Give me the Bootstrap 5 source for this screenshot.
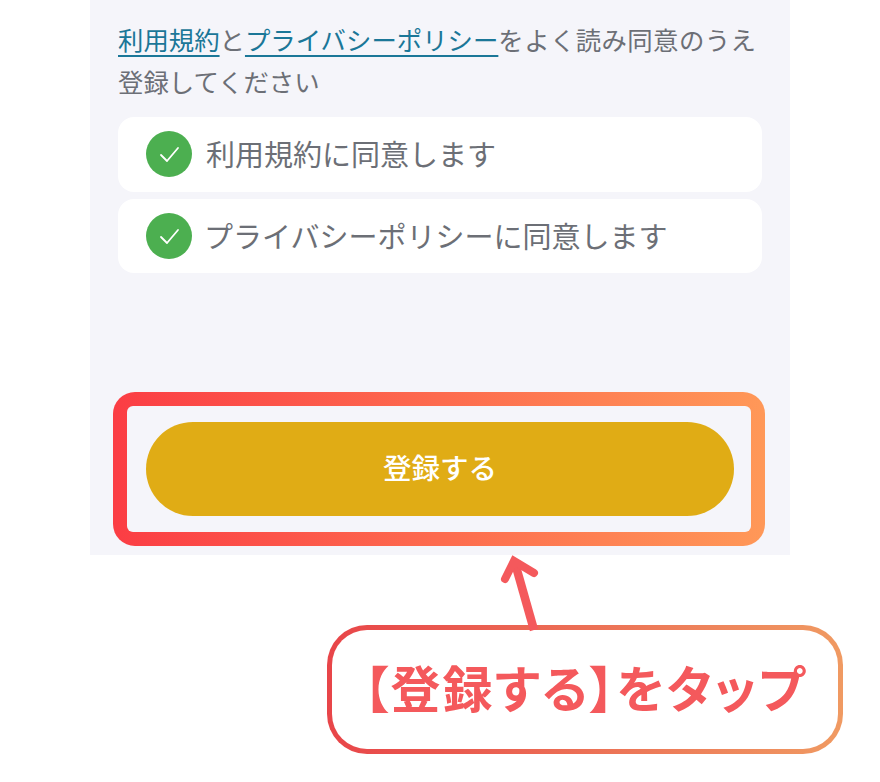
<!DOCTYPE html>
<html lang="ja">
<head>
<meta charset="utf-8">
<title>登録</title>
<link href="https://cdn.jsdelivr.net/npm/bootstrap@5.3.0/dist/css/bootstrap.min.css" rel="stylesheet">
<style>
html,body{height:782px;overflow:hidden;background:#fff}
body{font-family:"Noto Sans CJK JP","Liberation Sans",sans-serif;color:#6c6f76}
.sheet{width:700px;height:555px;margin-left:90px;padding:19px 28px 0 28px;background:#f5f5fa}
.intro{font-size:25.4px;line-height:41.5px;margin:0 0 15px;white-space:nowrap}
.intro a{color:#1b7798;text-underline-offset:5px;text-decoration-thickness:2px}
.intro-tail{letter-spacing:.4px}
.agree-row{height:75px;border-radius:16px;background:#fff;padding:0 0 2px 28px;gap:14px;margin-bottom:7px;font-size:29px;white-space:nowrap}
.agree-row+.agree-row{height:74px;padding-bottom:0}
.agree-row+.agree-row span{margin-left:-2px}
.agree-row svg{width:46px;height:46px;flex:none}
.frame{width:652px;height:154px;margin:119px 0 0 -5px;padding:14px;border-radius:22px;background:linear-gradient(90deg,#fb3d44,#ff9858)}
.frame-in{height:126px;border-radius:6px;background:#f5f5fa;padding:16px 19px}
.go-btn{width:588px;height:94px;border:0;border-radius:47px;background:#e0ac15;color:#fff;font-size:28.5px;font-weight:500;padding:0 0 4px}
.go-btn:hover,.go-btn:active{background:#e0ac15!important;color:#fff!important}
.callout-wrap{position:relative;height:227px}
.arrow{position:absolute;left:490px;top:0;width:70px;height:85px}
.callout{position:absolute;left:327px;top:70px;width:516px;height:129px;padding:5px;border-radius:40px;background:linear-gradient(90deg,#e84549,#f09a62)}
.callout-in{width:100%;height:100%;border-radius:35px;background:#fff;color:#f4595c;font-size:50px;font-weight:700;letter-spacing:2px;white-space:nowrap;font-feature-settings:"palt";padding-bottom:6px}
</style>
</head>
<body>
<div class="sheet">
  <p class="intro"><a href="#">利用規約</a>と<a href="#">プライバシーポリシー</a><span class="intro-tail">をよく読み同意のうえ</span><br>登録してください</p>
  <div class="agree-row d-flex align-items-center">
    <svg viewBox="0 0 46 46"><circle cx="23" cy="23" r="23" fill="#4caf50"/><path d="M15 24l6 6 11-13" fill="none" stroke="#fff" stroke-width="1.8" stroke-linecap="round" stroke-linejoin="round"/></svg>
    <span>利用規約に同意します</span>
  </div>
  <div class="agree-row d-flex align-items-center">
    <svg viewBox="0 0 46 46"><circle cx="23" cy="23" r="23" fill="#4caf50"/><path d="M15 24l6 6 11-13" fill="none" stroke="#fff" stroke-width="1.8" stroke-linecap="round" stroke-linejoin="round"/></svg>
    <span>プライバシーポリシーに同意します</span>
  </div>
  <div class="frame">
    <div class="frame-in">
      <button type="button" class="btn go-btn d-block">登録する</button>
    </div>
  </div>
</div>
<div class="callout-wrap">
  <div class="callout"><div class="callout-in d-flex align-items-center justify-content-center">【登録する】をタップ</div></div>
  <svg class="arrow" viewBox="0 0 70 85"><path d="M44 75L25 8" fill="none" stroke="#f4595c" stroke-width="8.5"/><path d="M15 24L24 6L44 18" fill="none" stroke="#f4595c" stroke-width="8" stroke-linecap="round" stroke-linejoin="miter"/></svg>
</div>
</body>
</html>
